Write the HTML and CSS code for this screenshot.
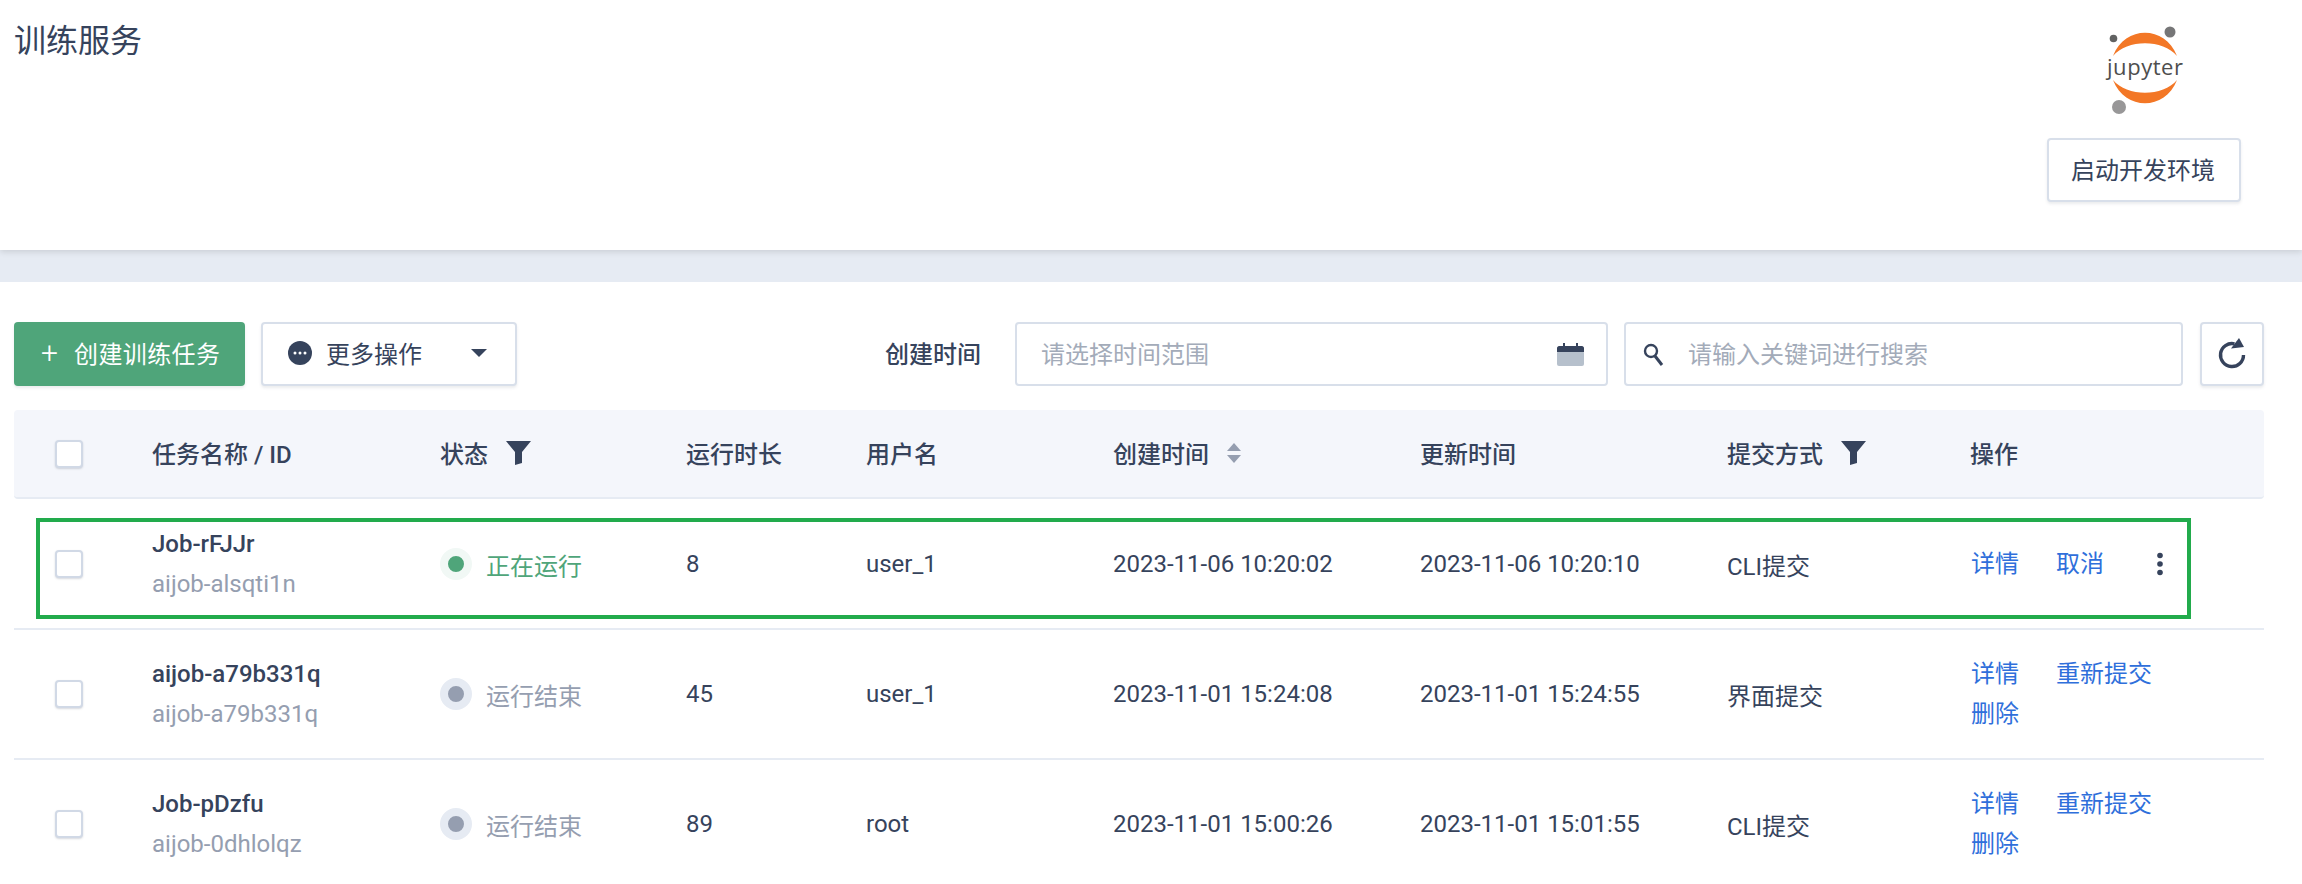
FILE: index.html
```html
<!DOCTYPE html>
<html lang="zh-CN">
<head>
    <meta charset="UTF-8">
    <title>训练服务</title>
    <link rel="stylesheet" href="styles.css">
</head>
<body>
<header class="banner">
    <h1 class="banner-title">训练服务</h1>
    <div class="banner-side">
        <svg class="jupyter" width="86" height="92" viewBox="0 0 86 92">
            <circle cx="69" cy="10" r="5.5" fill="#767677"/>
            <circle cx="12.500" cy="16.500" r="3.800" fill="#616262"/>
            <circle cx="18" cy="85" r="7" fill="#989798"/>
            <path d="M12 34 C24 3 64 3 76 34 C62 17 26 17 12 34 Z" fill="#f37726"/>
            <path d="M12 58 C26 75 62 75 76 58 C64 89 24 89 12 58 Z" fill="#f37726"/>
            <text x="6" y="53" textLength="76" class="jupyter-text">jupyter</text>
        </svg>
        <button class="btn btn-env">启动开发环境</button>
    </div>
</header>
<div class="band"></div>

<main class="content">
    <div class="toolbar">
        <button class="btn btn-create"><span class="plus">+</span>创建训练任务</button>
        <button class="btn btn-more">
            <svg width="24" height="24" viewBox="0 0 24 24"><circle cx="12" cy="12" r="12" fill="#36435c"/><circle cx="7" cy="12" r="1.5" fill="#fff"/><circle cx="12" cy="12" r="1.5" fill="#fff"/><circle cx="17" cy="12" r="1.5" fill="#fff"/></svg>
            <span class="more-label">更多操作</span>
            <svg width="16" height="8" viewBox="0 0 16 8"><path d="M0 0H16L8 8Z" fill="#36435c"/></svg>
        </button>
        <span class="date-label">创建时间</span>
        <div class="field field-date">
            <span class="placeholder">请选择时间范围</span>
            <svg width="27" height="23" viewBox="0 0 27 23"><rect x="0" y="8" width="27" height="15" rx="2" fill="#b6c0cc"/><path d="M2 3H6V0H8V3H19V0H21V3H25C26 3 27 4 27 5V9H0V5C0 4 1 3 2 3Z" fill="#36435c"/></svg>
        </div>
        <div class="field field-search">
            <svg width="21" height="25" viewBox="0 0 21 25"><circle cx="8" cy="9" r="6" fill="none" stroke="#36435c" stroke-width="2.4"/><path d="M12 14L19 23" stroke="#36435c" stroke-width="3"/></svg>
            <span class="placeholder">请输入关键词进行搜索</span>
        </div>
        <button class="btn btn-refresh">
            <svg width="28" height="32" viewBox="0 0 28 32"><path d="M16.500 6.800A11.500 11.500 0 1 0 25.500 18" fill="none" stroke="#36435c" stroke-width="3.400"/><path d="M21 1L26 10L13 11.500Z" fill="#36435c"/></svg>
        </button>
    </div>

    <div class="row row-head">
        <div class="cell-check"><span class="check"></span></div>
        <div>任务名称 / ID</div>
        <div class="with-icon">状态
            <svg width="25" height="24" viewBox="0 0 25 24"><path d="M0 0H25L16 11V22L9 24V11Z" fill="#36435c"/></svg>
        </div>
        <div>运行时长</div>
        <div>用户名</div>
        <div class="with-icon">创建时间
            <svg width="14" height="20" viewBox="0 0 14 20"><path d="M7 0L14 8H0Z" fill="#959eb0"/><path d="M0 12H14L7 20Z" fill="#959eb0"/></svg>
        </div>
        <div>更新时间</div>
        <div class="with-icon">提交方式
            <svg width="25" height="24" viewBox="0 0 25 24"><path d="M0 0H25L16 11V22L9 24V11Z" fill="#36435c"/></svg>
        </div>
        <div>操作</div>
    </div>

    <div class="row">
        <div class="cell-check"><span class="check"></span></div>
        <div class="name"><b>Job-rFJJr</b><span>aijob-alsqti1n</span></div>
        <div class="status status-run"><i></i>正在运行</div>
        <div>8</div>
        <div>user_1</div>
        <div>2023-11-06 10:20:02</div>
        <div>2023-11-06 10:20:10</div>
        <div>CLI提交</div>
        <div class="acts">
            <a>详情</a><a>取消</a>
            <svg width="8" height="24" viewBox="0 0 8 24"><circle cx="4" cy="3.500" r="2.800" fill="#36435c"/><circle cx="4" cy="12" r="2.800" fill="#36435c"/><circle cx="4" cy="20.500" r="2.800" fill="#36435c"/></svg>
        </div>
        <div class="mark"></div>
    </div>

    <div class="row">
        <div class="cell-check"><span class="check"></span></div>
        <div class="name"><b>aijob-a79b331q</b><span>aijob-a79b331q</span></div>
        <div class="status"><i></i>运行结束</div>
        <div>45</div>
        <div>user_1</div>
        <div>2023-11-01 15:24:08</div>
        <div>2023-11-01 15:24:55</div>
        <div>界面提交</div>
        <div class="acts acts-wrap"><a>详情</a><a>重新提交</a><a>删除</a></div>
    </div>

    <div class="row">
        <div class="cell-check"><span class="check"></span></div>
        <div class="name"><b>Job-pDzfu</b><span>aijob-0dhlolqz</span></div>
        <div class="status"><i></i>运行结束</div>
        <div>89</div>
        <div>root</div>
        <div>2023-11-01 15:00:26</div>
        <div>2023-11-01 15:01:55</div>
        <div>CLI提交</div>
        <div class="acts acts-wrap"><a>详情</a><a>重新提交</a><a>删除</a></div>
    </div>
</main>
</body>
</html>
```

FILE: styles.css
```css
html, body {
    height: 884px;
    overflow: hidden;
}
body {
    margin: 0;
    background-color: #fff;
    color: #36435c;
    font-family: Roboto, "Noto Sans CJK SC", sans-serif;
    font-size: 24px;
}
.banner {
    display: flex;
    justify-content: space-between;
    height: 250px;
    padding: 0 61px 0 14px;
    box-shadow: 0 2px 6px rgba(0, 0, 0, 0.12);
    position: relative;
}
.banner-title {
    margin: 18px 0 0;
    font-size: 32px;
    font-weight: 400;
    line-height: 46px;
}
.banner-side {
    display: flex;
    flex-direction: column;
    align-items: center;
    padding-top: 22px;
}
.jupyter-text {
    font-family: "Open Sans", sans-serif;
    font-size: 22px;
    fill: #4e4e4e;
}
.band {
    height: 32px;
    background-color: #e6ebf3;
}
.content {
    padding: 40px 38px 0 14px;
}
.btn {
    box-sizing: border-box;
    height: 64px;
    padding: 0 0 3px;
    background-color: #fff;
    border: 2px solid #d8dfea;
    border-radius: 4px;
    box-shadow: 0 2px 3px rgba(54, 67, 92, 0.1);
    color: #36435c;
    font: inherit;
}
.btn-env {
    width: 194px;
    margin-top: 24px;
    padding-right: 2px;
}
.toolbar {
    display: flex;
    align-items: center;
    height: 64px;
    margin-bottom: 24px;
}
.btn-create {
    display: flex;
    align-items: center;
    width: 231px;
    padding-left: 27px;
    background-color: #4fa57a;
    border: none;
    color: #fff;
    letter-spacing: 0.4px;
}
.plus {
    width: 33px;
    font-size: 30px;
    font-weight: 300;
    line-height: 1;
    text-align: left;
}
.btn-more {
    display: flex;
    align-items: center;
    width: 256px;
    margin-left: 16px;
    padding-left: 25px;
}
.more-label {
    width: 145px;
    margin-left: 14px;
    text-align: left;
}
.date-label {
    margin-left: 368px;
    padding-bottom: 3px;
    width: 130px;
    font-weight: 500;
}
.field {
    box-sizing: border-box;
    display: flex;
    align-items: center;
    height: 64px;
    background-color: #fff;
    border: 2px solid #d8dfea;
    border-radius: 4px;
}
.field-date {
    justify-content: space-between;
    width: 593px;
    padding: 0 22px 0 24px;
}
.field-search {
    width: 559px;
    margin-left: 16px;
    padding-left: 17px;
}
.field-search .placeholder {
    margin-left: 24px;
}
.placeholder {
    padding-bottom: 3px;
    color: #a3abb9;
}
.btn-refresh {
    display: flex;
    align-items: center;
    justify-content: center;
    width: 64px;
    margin-left: 17px;
}
.row {
    box-sizing: border-box;
    display: grid;
    grid-template-columns: 138px 288px 246px 180px 247px 307px 307px 243px 1fr;
    align-items: center;
    height: 130px;
    border-bottom: 2px solid #e6ebf3;
    position: relative;
}
.row-head {
    height: 89px;
    margin-bottom: 1px;
    padding-bottom: 2px;
    background-color: #f4f6fb;
    border-radius: 4px;
    font-weight: 500;
}
.row-head .cell-check {
    margin-top: 2px;
}
.cell-check {
    padding-left: 41px;
    display: flex;
}
.check {
    box-sizing: border-box;
    width: 28px;
    height: 28px;
    background-color: #fff;
    border: 2px solid #d1d9e6;
    border-radius: 4px;
    box-shadow: 0 1px 2px rgba(54, 67, 92, 0.2);
}
.with-icon {
    display: flex;
    align-items: center;
    gap: 18px;
}
.name b {
    display: block;
    font-weight: 500;
    line-height: 40px;
}
.name span {
    display: block;
    color: #959eb0;
    line-height: 40px;
}
.status {
    display: flex;
    align-items: center;
    color: #959eb0;
}
.status i {
    box-sizing: border-box;
    width: 32px;
    height: 32px;
    margin-right: 14px;
    background-color: #959eb0;
    border: 8px solid #e6ebf3;
    border-radius: 50%;
}
.status-run {
    color: #4fa57a;
}
.status-run i {
    background-color: #4fa57a;
    border-color: #f1f8f5;
}
.acts {
    display: grid;
    grid-template-columns: 85px 100px auto;
    align-items: center;
    padding-left: 1px;
    line-height: 40px;
}
.acts-wrap {
    grid-template-columns: 85px 100px;
}
.acts a {
    color: #2f6fdb;
}
.mark {
    position: absolute;
    left: 22px;
    top: 18px;
    width: 2155px;
    height: 101px;
    box-sizing: border-box;
    border: 4px solid #22ab4c;
}
```
